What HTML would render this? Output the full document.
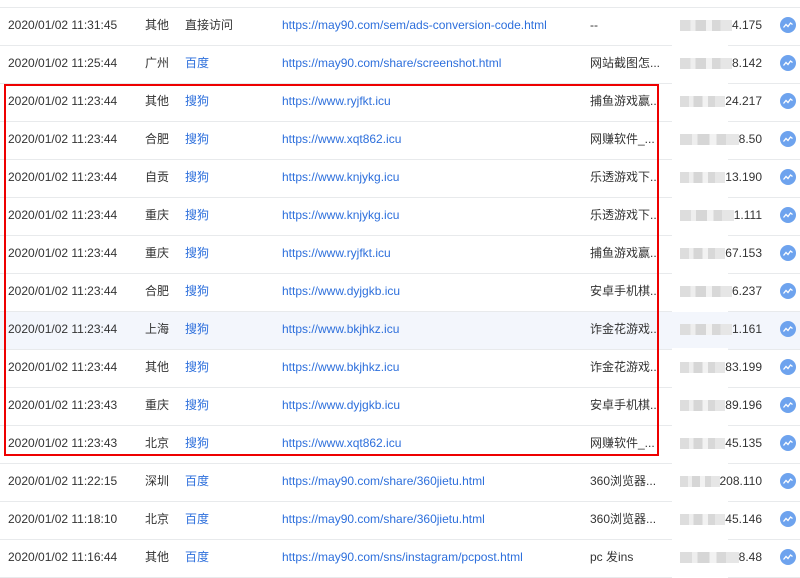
<!DOCTYPE html>
<html><head><meta charset="utf-8"><style>
body{margin:0;width:800px;height:576px;overflow:hidden;background:#fff;font-family:"Liberation Sans","Noto Sans CJK SC",sans-serif;font-size:12px;color:#333}
.r{position:absolute;left:0;width:800px;height:38px;border-bottom:1px solid #e8eaec;box-sizing:border-box}
.r span{position:absolute;top:-2px;line-height:38px;height:38px;white-space:nowrap}
.b{color:#2d6fdc}
.nw{position:absolute;left:680px;width:82px;top:0;height:34px;display:flex;align-items:center}
.bl{flex:1;height:11px;background:linear-gradient(90deg,#ddd 0 20%,#eee 20% 30%,#d6d6d6 30% 50%,#f2f2f2 50% 62%,#d8d8d8 62% 78%,#e6e6e6 78%)}
.nw i{font-style:normal}
.gap{position:absolute;left:672px;bottom:-1px;width:56px;height:2px;background:#fff}
.ic{position:absolute;left:780px;top:9px;width:16px;height:16px}
</style></head><body>
<div style="position:absolute;left:0;top:7px;width:800px;border-top:1px solid #e8eaec"></div>
<div id="c"></div>
<div style="position:absolute;left:4px;top:84px;width:651px;height:368px;border:2px solid #e00"></div>
<script>
var rows=[
["2020/01/02 11:31:45","其他","直接访问","https://may90.com/sem/ads-conversion-code.html","--","4.175",0],
["2020/01/02 11:25:44","广州","百度","https://may90.com/share/screenshot.html","网站截图怎...","8.142",1],
["2020/01/02 11:23:44","其他","搜狗","https://www.ryjfkt.icu","捕鱼游戏赢...","24.217",1],
["2020/01/02 11:23:44","合肥","搜狗","https://www.xqt862.icu","网赚软件_...","8.50",1],
["2020/01/02 11:23:44","自贡","搜狗","https://www.knjykg.icu","乐透游戏下...","13.190",1],
["2020/01/02 11:23:44","重庆","搜狗","https://www.knjykg.icu","乐透游戏下...","1.111",1],
["2020/01/02 11:23:44","重庆","搜狗","https://www.ryjfkt.icu","捕鱼游戏赢...","67.153",1],
["2020/01/02 11:23:44","合肥","搜狗","https://www.dyjgkb.icu","安卓手机棋...","6.237",1],
["2020/01/02 11:23:44","上海","搜狗","https://www.bkjhkz.icu","诈金花游戏...","1.161",1],
["2020/01/02 11:23:44","其他","搜狗","https://www.bkjhkz.icu","诈金花游戏...","83.199",1],
["2020/01/02 11:23:43","重庆","搜狗","https://www.dyjgkb.icu","安卓手机棋...","89.196",1],
["2020/01/02 11:23:43","北京","搜狗","https://www.xqt862.icu","网赚软件_...","45.135",1],
["2020/01/02 11:22:15","深圳","百度","https://may90.com/share/360jietu.html","360浏览器...","208.110",1],
["2020/01/02 11:18:10","北京","百度","https://may90.com/share/360jietu.html","360浏览器...","45.146",1],
["2020/01/02 11:16:44","其他","百度","https://may90.com/sns/instagram/pcpost.html","pc 发ins","8.48",1]];
var h="";
rows.forEach(function(r,i){
var bg=i==8?"background:#f3f6fc;":"";
h+='<div class="r" style="top:'+(8+i*38)+'px;'+bg+'"><span style="left:8px">'+r[0]+'</span><span style="left:145px">'+r[1]+'</span><span style="left:185px" class="'+(r[6]?'b':'')+'">'+r[2]+'</span><span class="b" style="left:282px">'+r[3]+'</span><span style="left:590px">'+r[4]+'</span><div class="gap"></div><div class="nw"><div class="bl"></div><i>'+r[5]+'</i></div><svg class="ic" viewBox="0 0 16 16"><circle cx="8" cy="8" r="8" fill="#6ea3ee"/><path d="M3.5 10.5 L6 7.5 L8 9.5 L10.5 6 L12.5 7.5" stroke="#fff" stroke-width="1.3" fill="none"/></svg></div>';
});
document.getElementById("c").innerHTML=h;
</script>
</body></html>
